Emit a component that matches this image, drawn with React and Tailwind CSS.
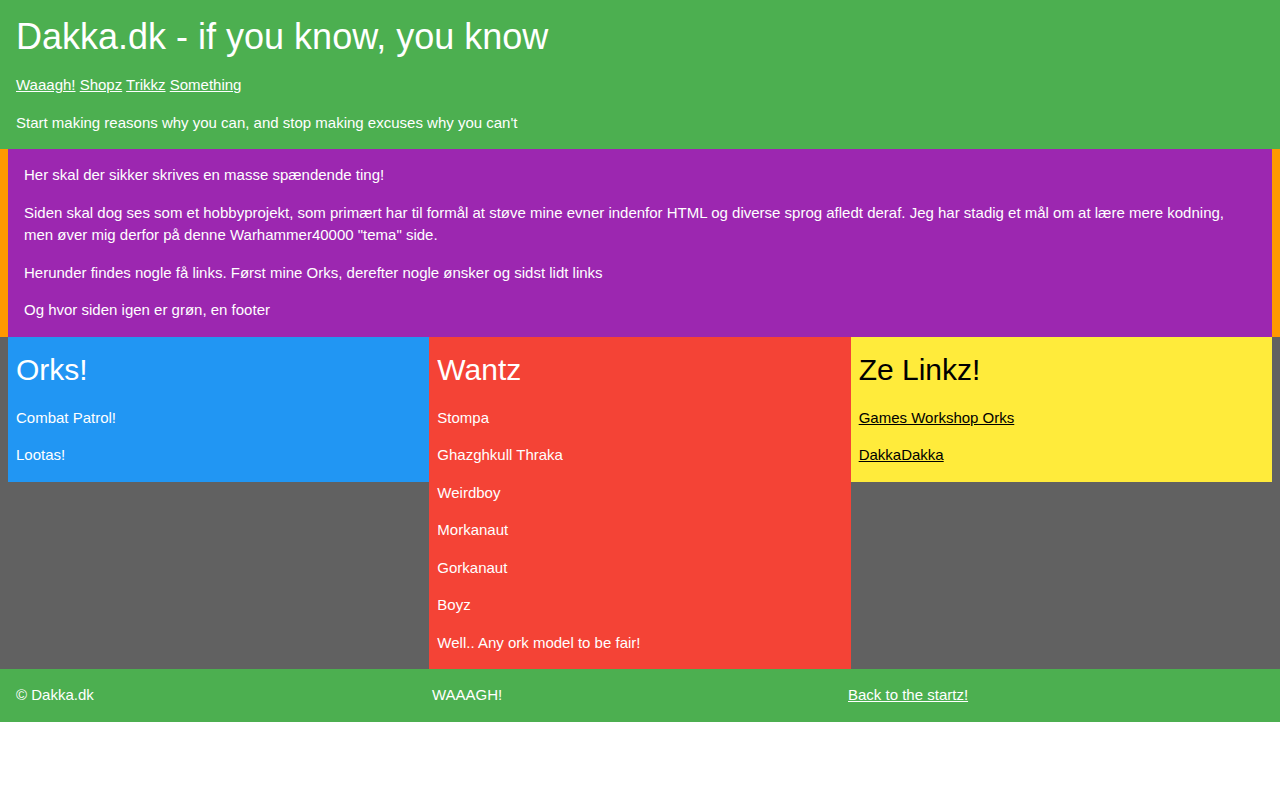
export default function App() {
  const wants = [
    "Stompa",
    "Ghazghkull Thraka",
    "Weirdboy",
    "Morkanaut",
    "Gorkanaut",
    "Boyz",
    "Well.. Any ork model to be fair!",
  ];
  return (
    <div
      className="text-[15px] leading-[1.5] text-white"
      style={{ fontFamily: '"Liberation Sans", Arial, sans-serif' }}
    >
      <header className="bg-[#4CAF50] px-4 flow-root">
        <h1 className="my-[10px] text-[36px] leading-[1.5] font-normal">
          Dakka.dk - if you know, you know
        </h1>
        <nav>
          <a href="#" className="underline">Waaagh!</a>{" "}
          <a href="#" className="underline">Shopz</a>{" "}
          <a href="#" className="underline">Trikkz</a>{" "}
          <a href="#" className="underline">Something</a>
        </nav>
        <p className="my-[15px]">
          Start making reasons why you can, and stop making excuses why you can't
        </p>
      </header>

      <section className="bg-[#9C27B0] border-x-8 border-[#FF9800] px-4 flow-root">
        <p className="my-[15px]">Her skal der sikker skrives en masse spændende ting!</p>
        <p className="my-[15px]">
          Siden skal dog ses som et hobbyprojekt, som primært har til formål at støve mine evner indenfor HTML og diverse sprog afledt deraf. Jeg har stadig et mål om at lære mere kodning, men øver mig derfor på denne Warhammer40000 "tema" side.
        </p>
        <p className="my-[15px]">
          Herunder findes nogle få links. Først mine Orks, derefter nogle ønsker og sidst lidt links
        </p>
        <p className="my-[15px]">Og hvor siden igen er grøn, en footer</p>
      </section>

      <main className="bg-[#616161] px-2 grid grid-cols-3 items-start">
        <div className="bg-[#2196F3] px-2 flow-root">
          <h2 className="my-[10px] text-[30px] leading-[1.5] font-normal">Orks!</h2>
          <p className="my-[15px]">Combat Patrol!</p>
          <p className="my-[15px]">Lootas!</p>
        </div>
        <div className="bg-[#F44336] px-2 flow-root">
          <h2 className="my-[10px] text-[30px] leading-[1.5] font-normal">Wantz</h2>
          {wants.map((w) => (
            <p key={w} className="my-[15px]">{w}</p>
          ))}
        </div>
        <div className="bg-[#FFEB3B] text-black px-2 flow-root">
          <h2 className="my-[10px] text-[30px] leading-[1.5] font-normal">Ze Linkz!</h2>
          <p className="my-[15px]"><a href="#" className="underline">Games Workshop Orks</a></p>
          <p className="my-[15px]"><a href="#" className="underline">DakkaDakka</a></p>
        </div>
      </main>

      <footer className="bg-[#4CAF50] px-4 grid grid-cols-3">
        <p className="my-[15px]">© Dakka.dk</p>
        <p className="my-[15px]">WAAAGH!</p>
        <p className="my-[15px]"><a href="#" className="underline">Back to the startz!</a></p>
      </footer>
    </div>
  );
}
